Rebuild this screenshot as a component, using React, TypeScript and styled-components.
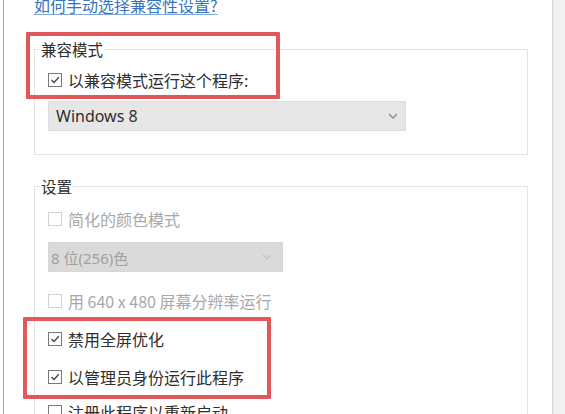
import React from "react";
import styled, { createGlobalStyle } from "styled-components";

const GlobalStyle = createGlobalStyle`
  html, body { margin: 0; padding: 0; background: #ffffff; }
  body { font-family: "Noto Sans CJK SC", "Noto Sans", sans-serif; }
`;

const Page = styled.div`
  position: relative;
  width: 565px;
  height: 414px;
  overflow: hidden;
  display: flex;
  background: #ffffff;
`;

const Gutter = styled.div`
  width: 3px;
  flex: none;
`;

const Window = styled.div`
  flex: 1;
  border-left: 1px solid #a6a6a6;
  border-right: 1px solid #dadada;
  padding-left: 30px;
  display: flex;
  flex-direction: column;
`;

const SideStrip = styled.div`
  width: 11px;
  flex: none;
  background: #f2f2f2;
  border-left: 1px solid #e6e6e6;
`;

const HelpLink = styled.a`
  display: block;
  margin-top: -5px;
  line-height: 21px;
  font-size: 16px;
  color: #3574c0;
  text-decoration: underline;
  text-decoration-color: #7ea6d8;
  text-underline-offset: 2px;
  cursor: pointer;
`;

const Group = styled.fieldset<{ $top: number }>`
  margin: ${(p) => p.$top}px 0 0 0;
  padding: 0;
  width: 494px;
  min-width: 0;
  box-sizing: border-box;
  border: 1px solid #e4e4e4;
`;

const GroupTitle = styled.legend`
  margin-left: 5px;
  padding: 0 1px;
  line-height: 20px;
  font-size: 15.5px;
  color: #2e2e2e;
`;

const GroupBody = styled.div<{ $bottom: number }>`
  padding: 2px 0 ${(p) => p.$bottom}px 13px;
  display: flex;
  flex-direction: column;
`;

const Row = styled.label<{ $disabled?: boolean; $mt?: number }>`
  height: 38px;
  margin-top: ${(p) => p.$mt ?? 0}px;
  display: flex;
  align-items: center;
  gap: 6px;
  font-size: 16px;
  color: ${(p) => (p.$disabled ? "#a8a8a8" : "#2e2e2e")};
  white-space: nowrap;
`;

const Box = styled.span<{ $disabled?: boolean }>`
  width: 14px;
  height: 14px;
  box-sizing: border-box;
  border: 1px solid ${(p) => (p.$disabled ? "#d2d2d2" : "#7a7a7a")};
  background: #ffffff;
  display: flex;
  align-items: center;
  justify-content: center;
  flex: none;
`;

const Select = styled.div<{ $width: number; $disabled?: boolean; $mt?: number }>`
  width: ${(p) => p.$width}px;
  height: 30px;
  margin-top: ${(p) => p.$mt ?? 0}px;
  box-sizing: border-box;
  display: flex;
  align-items: center;
  justify-content: space-between;
  padding: ${(p) => (p.$disabled ? "0 10px 0 2px" : "0 7px 0 7px")};
  background: ${(p) => (p.$disabled ? "#dadada" : "#e7e7e7")};
  border: 1px solid ${(p) => (p.$disabled ? "#d6d6d6" : "#dcdcdc")};
  color: ${(p) => (p.$disabled ? "#a0a0a0" : "#2e2e2e")};
  font-family: "Noto Sans", "Noto Sans CJK SC", sans-serif;
  font-size: ${(p) => (p.$disabled ? 15 : 16)}px;
`;

const Highlight = styled.div<{ $x: number; $y: number; $w: number; $h: number }>`
  position: absolute;
  left: ${(p) => p.$x}px;
  top: ${(p) => p.$y}px;
  width: ${(p) => p.$w}px;
  height: ${(p) => p.$h}px;
  box-sizing: border-box;
  border: 4px solid #e1585b;
  border-radius: 1px;
  pointer-events: none;
`;

const Check = () => (
  <svg width="10" height="10" viewBox="0 0 10 10">
    <polyline points="1.5,5 4,7.5 8.8,2.2" fill="none" stroke="#444" strokeWidth="1.3" />
  </svg>
);

const Chevron = ({ color }: { color: string }) => (
  <svg width="10" height="6" viewBox="0 0 10 6">
    <polyline points="1,1 5,5 9,1" fill="none" stroke={color} strokeWidth="1.3" />
  </svg>
);

const Option = ({
  text,
  checked,
  disabled,
  mt,
}: {
  text: string;
  checked?: boolean;
  disabled?: boolean;
  mt?: number;
}) => (
  <Row $disabled={disabled} $mt={mt}>
    <Box $disabled={disabled}>{checked && <Check />}</Box>
    {text}
  </Row>
);

export default function App() {
  return (
    <>
      <GlobalStyle />
      <Page>
        <Gutter />
        <Window>
          <HelpLink>如何手动选择兼容性设置?</HelpLink>
          <Group $top={23}>
            <GroupTitle>兼容模式</GroupTitle>
            <GroupBody $bottom={23}>
              <Option text="以兼容模式运行这个程序:" checked />
              <Select $width={358} $mt={2}>
                Windows 8
                <Chevron color="#8a8a8a" />
              </Select>
            </GroupBody>
          </Group>
          <Group $top={21}>
            <GroupTitle>设置</GroupTitle>
            <GroupBody $bottom={0}>
              <Option text="简化的颜色模式" disabled mt={2} />
              <Select $width={235} $disabled $mt={4}>
                8 位(256)色
                <Chevron color="#c4c4c4" />
              </Select>
              <Option text="用 640 x 480 屏幕分辨率运行" disabled mt={10} />
              <Option text="禁用全屏优化" checked />
              <Option text="以管理员身份运行此程序" checked />
              <Option text="注册此程序以重新启动" mt={-3} />
            </GroupBody>
          </Group>
        </Window>
        <SideStrip />
        <Highlight $x={26} $y={32} $w={254} $h={67} />
        <Highlight $x={23} $y={317} $w={248} $h={82} />
      </Page>
    </>
  );
}
